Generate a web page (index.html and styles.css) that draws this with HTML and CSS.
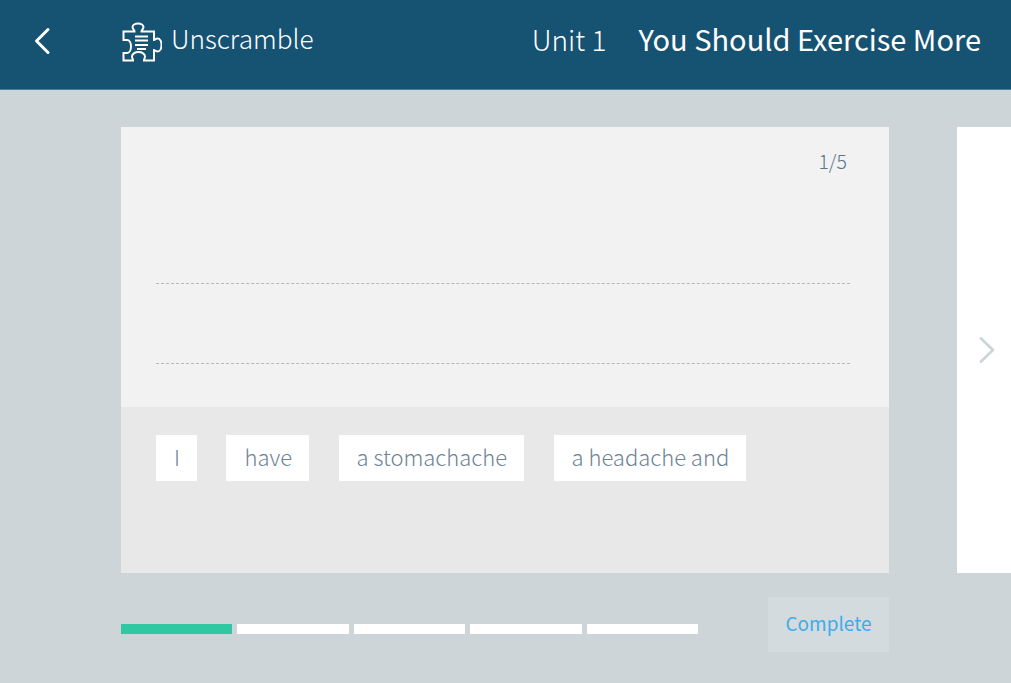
FILE: index.html
```html
<!DOCTYPE html>
<html lang="en">
<head>
  <meta charset="UTF-8" />
  <title>Unscramble</title>
  <link rel="stylesheet" href="styles.css">
</head>
<body>
  <header class="topbar">
    <a class="back" href="#">
      <svg width="18" height="28" viewBox="0 0 18 28"><path d="M15 2.500 L3.500 14 L15 25.500" fill="none" stroke="#fff" stroke-width="3" stroke-linecap="round" stroke-linejoin="round"/></svg>
    </a>
    <div class="activity">
      <svg class="puzzle" width="40" height="40" viewBox="0 0 40 40" fill="none" stroke="#fff" stroke-width="2">
        <path d="M1.500 9.500 H12.500 C12.500 8 10.500 7 10.500 5 C10.500 3 13 1.500 16 1.500 C19 1.500 21.500 3 21.500 5 C21.500 7 19.500 8 19.500 9.500 H32 V18 C33 18 33.500 16.500 35.500 16.500 C38 16.500 39.500 19.500 39.500 23 C39.500 26.500 38 29.500 35.500 29.500 C33.500 29.500 33 28 32 28 V38.500 H22 C22 37 23 36 23 34.500 C23 32 20 30 16.500 30 C13 30 10 32 10 34.500 C10 36 11 37 11 38.500 H1.500 V31 H5 C7.500 31 9 28 9 24.500 C9 21 7.500 18 5 18 H1.500 Z"/>
        <path d="M13 14.500 H26 M13 18.500 H26 M13 23 H26 M15 27 H24" stroke-width="1.800"/>
      </svg>
      <span>Unscramble</span>
    </div>
    <div class="titles">
      <span class="unit">Unit 1</span>
      <span class="lesson">You Should Exercise More</span>
    </div>
  </header>

  <main class="stage">
    <div class="slides">
      <section class="card">
        <div class="answer">
          <div class="count">1/5</div>
          <div class="line line-first"></div>
          <div class="line line-second"></div>
        </div>
        <div class="words">
          <span class="word">I</span>
          <span class="word">have</span>
          <span class="word">a stomachache</span>
          <span class="word">a headache and</span>
        </div>
      </section>
      <aside class="next-card">
        <svg width="18" height="28" viewBox="0 0 18 28"><path d="M3 2.500 L15 14 L3 25.500" fill="none" stroke="#cdd5d9" stroke-width="2.800" stroke-linecap="round" stroke-linejoin="round"/></svg>
      </aside>
    </div>

    <div class="footer">
      <div class="progress">
        <span class="step done"></span>
        <span class="step"></span>
        <span class="step"></span>
        <span class="step"></span>
        <span class="step"></span>
      </div>
      <button class="complete">Complete</button>
    </div>
  </main>
</body>
</html>
```

FILE: styles.css
```css
* {
  box-sizing: border-box;
}

body {
  margin: 0;
  height: 683px;
  overflow: hidden;
  background: #cdd5d9;
  font-family: "Noto Sans CJK SC", "Noto Sans", sans-serif;
  font-weight: 300;
}

.topbar {
  height: 90px;
  background: #165272;
  border-bottom: 1px solid #4f7c93;
  color: #fff;
  display: flex;
  align-items: center;
  padding: 0 30px 8px 33px;
}

.back {
  display: flex;
  width: 89px;
}

.activity {
  display: flex;
  align-items: center;
  gap: 9px;
  font-size: 26.200px;
}

.activity span {
  margin-top: -5px;
}

.puzzle {
  margin-top: 3px;
}

.titles {
  margin-left: auto;
  display: flex;
  align-items: baseline;
  gap: 32px;
  font-size: 29px;
  margin-top: -5px;
}

.unit {
  font-size: 28.100px;
}

.lesson {
  font-weight: 400;
}

.stage {
  padding: 37px 0 0 121px;
}

.slides {
  display: flex;
  gap: 68px;
}

.card {
  width: 768px;
  height: 446px;
  display: flex;
  flex-direction: column;
}

.answer {
  height: 280px;
  background: #f2f2f2;
  padding: 19px 35px 0;
}

.count {
  text-align: right;
  padding-right: 7px;
  font-size: 19.500px;
  line-height: 30px;
  color: #5d7488;
}

.line {
  border-top: 1px dashed #b4b9bb;
  height: 80px;
}

.line-first {
  margin: 107px 4px 0 0;
}

.line-second {
  margin-right: 4px;
}

.words {
  flex: 1;
  background: #e8e8e8;
  padding: 28px 35px;
  display: flex;
  align-items: flex-start;
  gap: 29.500px;
}

.word {
  height: 46px;
  padding: 0 17px 0 18px;
  background: #fff;
  color: #6d8396;
  font-size: 22px;
  line-height: 42px;
}

.next-card {
  width: 54px;
  height: 446px;
  background: #fff;
  display: flex;
  align-items: center;
  padding: 0 0 0 21px;
}

.footer {
  width: 768px;
  margin-top: 24px;
  display: flex;
  align-items: center;
  justify-content: space-between;
}

.progress {
  display: flex;
  gap: 5px;
  margin-top: 8px;
}

.step {
  width: 111.450px;
  height: 10px;
  background: #fff;
}

.step.done {
  background: #30c8a2;
}

.complete {
  width: 121px;
  height: 55px;
  border: none;
  background: #d3dbdf;
  color: #3fabe8;
  font-family: inherit;
  font-weight: 400;
  font-size: 19px;
  padding: 0 0 4px;
}
```
